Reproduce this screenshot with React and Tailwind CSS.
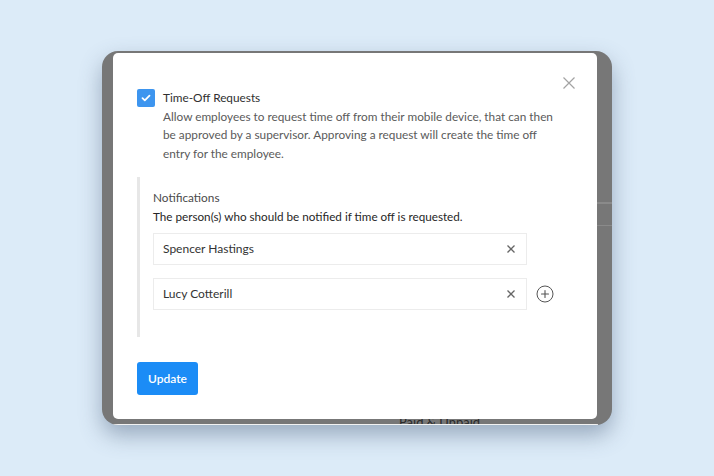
import React from "react";

const recipients = ["Spencer Hastings", "Lucy Cotterill"];

export default function App() {
  return (
    <div className="h-[476px] w-[714px] overflow-hidden bg-[#dcebf8] pl-[102px] pt-[51px] font-['Lato',sans-serif]">
      {/* dimmed page behind the dialog */}
      <div className="relative h-[374px] w-[510px] overflow-hidden rounded-[16px] bg-[#777777] shadow-[0_10px_22px_rgba(70,90,120,0.45)]">
        <div className="absolute right-0 top-[151px] h-[2px] w-[15px] bg-[#8a8a8a]" />
        <div className="absolute right-0 top-[174px] h-px w-[15px] bg-[#8a8a8a]" />
        <span className="absolute left-[297px] top-[362px] text-[13px] text-[#2a2a2a]">Paid &amp; Unpaid</span>
        <div className="absolute bottom-0 left-[10px] right-[14px] h-px bg-[#f2f2f2]" />

        <div className="relative z-10 ml-[11px] mt-[2px] h-[366px] w-[484px] rounded-[5px] bg-white px-[24px] pt-[36px]">
          <button className="absolute right-[22px] top-[24px] text-[#a3a3a3]">
            <Cross size={12} stroke={1.2} />
          </button>

          <div className="flex gap-[8px]">
            <Checkbox />
            <div className="whitespace-nowrap text-[11.8px] leading-[18.5px]">
              <p className="text-[#303030]">Time-Off Requests</p>
              <p className="text-[#5a5a5a]">
                Allow employees to request time off from their mobile device, that can then
                <br />
                be approved by a supervisor. Approving a request will create the time off
                <br />
                entry for the employee.
              </p>
            </div>
          </div>

          <div className="mt-[14px] border-l-[3px] border-[#e7e7e7] pb-[27px] pl-[13px] pt-[12px]">
            <p className="text-[11.8px] leading-[18px] text-[#4a4a4a]">Notifications</p>
            <p className="text-[11.7px] leading-[18px] text-[#262626]">
              The person(s) who should be notified if time off is requested.
            </p>
            <div className="mt-[8px] flex flex-col gap-[13px]">
              {recipients.map((name, i) => (
                <div key={name} className="flex items-center gap-[9px]">
                  <div className="flex h-[32px] w-[374px] items-center justify-between border border-[#ececec] pl-[9px] pr-[11px] text-[12px] text-[#333]">
                    <span>{name}</span>
                    <Cross size={8} stroke={1.3} className="text-[#666]" />
                  </div>
                  {i === recipients.length - 1 && <PlusCircle />}
                </div>
              ))}
            </div>
          </div>

          <button className="mt-[25px] h-[33px] w-[61px] rounded-[3px] bg-[#1b8cf6] text-[12px] font-semibold text-white">
            Update
          </button>
        </div>
      </div>
    </div>
  );
}

function Cross({ size, stroke, className }) {
  return (
    <svg width={size} height={size} viewBox={`0 0 ${size} ${size}`} fill="none" className={className}>
      <path d={`M0.5 0.5 ${size - 0.5} ${size - 0.5}M${size - 0.5} 0.5 0.5 ${size - 0.5}`} stroke="currentColor" strokeWidth={stroke} />
    </svg>
  );
}

function Checkbox() {
  return (
    <span className="flex h-[18px] w-[18px] shrink-0 items-center justify-center rounded-[2px] bg-[#3d95ef]">
      <svg width="10" height="8" viewBox="0 0 10 8" fill="none">
        <path d="M1.5 4.2 3.8 6.3 8.5 1.6" stroke="white" strokeWidth="1.8" strokeLinecap="round" strokeLinejoin="round" />
      </svg>
    </span>
  );
}

function PlusCircle() {
  return (
    <svg width="18" height="18" viewBox="0 0 18 18" fill="none" className="text-[#555]">
      <circle cx="9" cy="9" r="8" stroke="currentColor" strokeWidth="1" />
      <path d="M9 5.5v7M5.5 9h7" stroke="currentColor" strokeWidth="1.1" strokeLinecap="round" />
    </svg>
  );
}
